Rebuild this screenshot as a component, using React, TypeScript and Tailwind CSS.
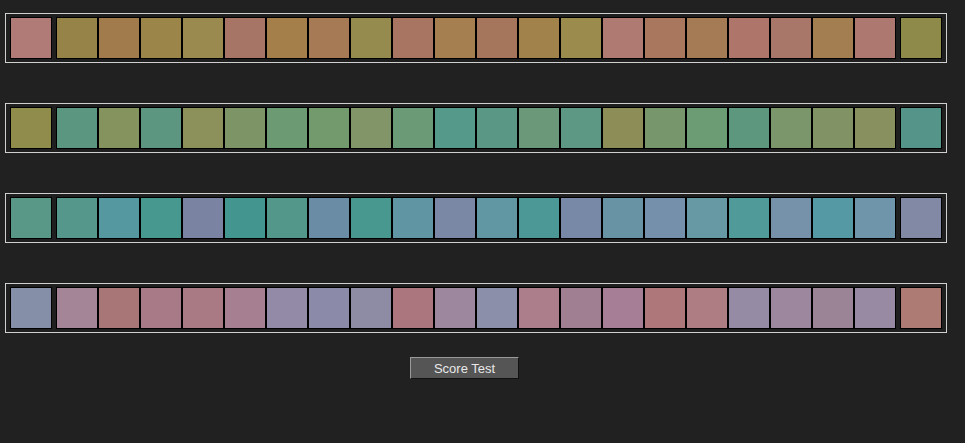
const rows: string[][] = [
  ["#b07b76", "#968347", "#a27b4d", "#9c8549", "#9b8a4f", "#a77565", "#a47f49", "#a57a55", "#958b4e", "#a87562", "#a57f4f", "#a5765b", "#a1824b", "#9b8c4e", "#ae7a72", "#a8775e", "#a57b55", "#ae766b", "#a9776a", "#a37e51", "#ad7870", "#8d8a4a"],
  ["#8f8c4c", "#5a9680", "#85945f", "#5c9680", "#8c905a", "#7d9467", "#6b9a73", "#739a6c", "#819568", "#6a9a76", "#55998a", "#5a9885", "#6a9878", "#5c9884", "#8d8d58", "#78966b", "#6b9c74", "#5d977e", "#7b966b", "#819264", "#899060", "#559589"],
  ["#599886", "#55978a", "#56989f", "#47988f", "#7a84a2", "#42968f", "#53978a", "#6b8ca5", "#489890", "#6096a3", "#7b88a5", "#6196a3", "#4b9896", "#7888a7", "#6893a4", "#7590ab", "#6699a4", "#509a99", "#7592aa", "#5599a4", "#6f95aa", "#8289a5"],
  ["#8590a8", "#a48497", "#a87676", "#a87a87", "#aa7a84", "#a67f91", "#928aa6", "#8b8aa8", "#8e8ca5", "#ac767e", "#9d879e", "#8b8faa", "#ac7d8a", "#a07f92", "#a67f96", "#ae787a", "#ae7d83", "#958ba5", "#9d879e", "#9b8496", "#998aa3", "#ae7a74"],
];

function Cap({ color }: { color: string }) {
  return <div className="w-[42px] h-[42px] border border-black shrink-0" style={{ backgroundColor: color }} />;
}

export default function App() {
  return (
    <div className="w-[965px] h-[443px] bg-[#212121] pt-[13px] pl-[5px]" style={{ fontFamily: '"Liberation Sans", Arial, sans-serif' }}>
      <div className="flex flex-col gap-[40px]">
        {rows.map((row, ri) => (
          <div key={ri} className="w-[942px] h-[50px] border border-[#cfcfcf] bg-[#1f1f1f] flex items-center px-[4px] py-[3px]">
            <Cap color={row[0]} />
            <div className="flex ml-[4px] mr-[4px]">
              {row.slice(1, 21).map((c, i) => (
                <Cap key={i} color={c} />
              ))}
            </div>
            <Cap color={row[21]} />
          </div>
        ))}
      </div>
      <div className="pl-[405px] pt-[24px]">
        <button className="w-[109px] h-[22px] bg-[#555555] border border-t-[#9a9a9a] border-l-[#9a9a9a] border-r-[#111] border-b-[#111] text-[#e8e8e8] text-[13px] leading-none flex items-center justify-center">
          Score Test
        </button>
      </div>
    </div>
  );
}
